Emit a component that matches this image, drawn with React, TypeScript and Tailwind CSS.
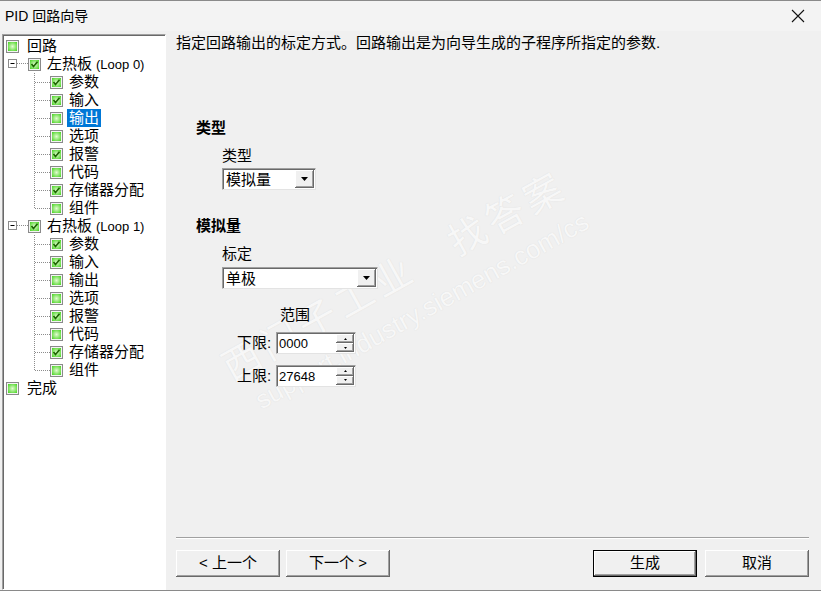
import React from 'react';

type Node = {
  level: 0 | 1 | 2;
  label: string;
  suffix?: string;
  checked: boolean;
  selected?: boolean;
  last?: boolean;
};

const loopChildren = (selectOutput: boolean): Node[] => [
  { level: 2, label: '参数', checked: true },
  { level: 2, label: '输入', checked: true },
  { level: 2, label: '输出', checked: false, selected: selectOutput },
  { level: 2, label: '选项', checked: false },
  { level: 2, label: '报警', checked: true },
  { level: 2, label: '代码', checked: false },
  { level: 2, label: '存储器分配', checked: true },
  { level: 2, label: '组件', checked: false, last: true },
];

const tree: Node[] = [
  { level: 0, label: '回路', checked: false },
  { level: 1, label: '左热板', suffix: '(Loop 0)', checked: true },
  ...loopChildren(true),
  { level: 1, label: '右热板', suffix: '(Loop 1)', checked: true },
  ...loopChildren(false),
  { level: 0, label: '完成', checked: false },
];

// 绿色复选框
function CheckBox({ on }: { on: boolean }) {
  return (
    <svg width="13" height="13" viewBox="0 0 13 13" className="shrink-0">
      <defs>
        <radialGradient id="cbg" cx="50%" cy="50%" r="65%">
          <stop offset="0%" stopColor="#e2fcd0" />
          <stop offset="100%" stopColor="#4fd52a" />
        </radialGradient>
      </defs>
      <rect x="0.5" y="0.5" width="12" height="12" fill="#f4f4f4" stroke="#8a8a8a" />
      <rect x="2" y="2" width="9" height="9" fill="url(#cbg)" />
      {on && <path d="M3.5 6 L5.5 8.5 L9.5 3.8" fill="none" stroke="#1c6500" strokeWidth="1.6" />}
    </svg>
  );
}

function Gutter({ node }: { node: Node }) {
  if (node.level === 0) return <div className="w-[3px] shrink-0" />;
  if (node.level === 1) {
    return (
      <svg width="25" height="18" viewBox="0 0 25 18" className="shrink-0">
        <line x1="14" y1="8.5" x2="25" y2="8.5" stroke="#8c8c8c" strokeDasharray="1 1" />
        <rect x="5.5" y="4.5" width="8" height="8" fill="#fff" stroke="#8c8c8c" />
        <line x1="7.5" y1="8.5" x2="11.5" y2="8.5" stroke="#000" />
      </svg>
    );
  }
  return (
    <svg width="47" height="18" viewBox="0 0 47 18" className="shrink-0">
      <line x1="31.5" y1="0" x2="31.5" y2={node.last ? 9 : 18} stroke="#8c8c8c" strokeDasharray="1 1" />
      <line x1="32" y1="9.5" x2="47" y2="9.5" stroke="#8c8c8c" strokeDasharray="1 1" />
    </svg>
  );
}

function TreeRow({ node }: { node: Node }) {
  return (
    <div className="flex h-[18px] items-center">
      <Gutter node={node} />
      <CheckBox on={node.checked} />
      <span
        className={
          node.selected
            ? 'ml-[4px] bg-[#0078d7] px-[2px] text-white leading-[18px] whitespace-nowrap'
            : node.level === 0
              ? 'ml-[7px] px-[1px] leading-[18px] whitespace-nowrap'
              : 'ml-[5px] px-[1px] leading-[18px] whitespace-nowrap'
        }
      >
        {node.label}
        {node.suffix && <span className="ml-[4px] text-[13px]">{node.suffix}</span>}
      </span>
    </div>
  );
}

function Arrow() {
  return (
    <svg width="7" height="4" viewBox="0 0 7 4">
      <path d="M0 0 H7 L3.5 4 Z" fill="#000" />
    </svg>
  );
}

function Combo({ value, wide }: { value: string; wide?: boolean }) {
  return (
    <div
      className={`flex h-[22px] items-stretch border border-[#a0a0a0] border-b-[#e3e3e3] border-r-[#e3e3e3] bg-white shadow-[inset_1px_1px_0_#696969] ${
        wide ? 'w-[156px]' : 'w-[94px]'
      }`}
    >
      <div className="flex-1 pl-[3px] pt-[1px] leading-[19px]">{value}</div>
      <div className="my-[1px] mr-[1px] flex w-[19px] items-center justify-center bg-[#f0f0f0] shadow-[inset_-1px_-1px_0_#696969,inset_1px_1px_0_#ffffff,inset_-2px_-2px_0_#a0a0a0]">
        <Arrow />
      </div>
    </div>
  );
}

function Spin({ label, value }: { label: string; value: string }) {
  return (
    <div className="flex items-center">
      <span className="w-[39px] whitespace-nowrap">{label}</span>
      <div className="flex h-[22px] w-[80px] items-stretch border border-[#a0a0a0] border-b-[#e3e3e3] border-r-[#e3e3e3] bg-white shadow-[inset_1px_1px_0_#696969]">
        <div className="flex-1 pl-[2px] pt-[2px] font-['Liberation_Sans',sans-serif] text-[13px] leading-[17px]">
          {value}
        </div>
        <div className="my-[1px] mr-[1px] flex w-[18px] flex-col">
          <div className="flex flex-1 items-center justify-center bg-[#f0f0f0] shadow-[inset_-1px_-1px_0_#696969,inset_1px_1px_0_#ffffff,inset_-2px_-2px_0_#a0a0a0]">
            <svg width="3" height="2" viewBox="0 0 3 2">
              <path d="M1.5 0 L3 2 H0 Z" fill="#000" />
            </svg>
          </div>
          <div className="flex flex-1 items-center justify-center bg-[#f0f0f0] shadow-[inset_-1px_-1px_0_#696969,inset_1px_1px_0_#ffffff,inset_-2px_-2px_0_#a0a0a0]">
            <svg width="3" height="2" viewBox="0 0 3 2">
              <path d="M0 0 H3 L1.5 2 Z" fill="#000" />
            </svg>
          </div>
        </div>
      </div>
    </div>
  );
}

function Btn({ children, primary }: { children: React.ReactNode; primary?: boolean }) {
  return (
    <div
      className={`flex h-[27px] w-[104px] items-center justify-center bg-[#f0f0f0] shadow-[inset_-1px_-1px_0_#696969,inset_1px_1px_0_#ffffff,inset_-2px_-2px_0_#a0a0a0] ${
        primary ? 'border border-black' : ''
      }`}
    >
      {children}
    </div>
  );
}

export default function App() {
  return (
    <div className="relative box-border flex h-[591px] w-[821px] flex-col overflow-hidden border-y border-[#8a8a8a] bg-[#f0f0f0] font-['Liberation_Sans','Noto_Sans_CJK_SC',sans-serif] text-[15px] text-black">
      {/* 水印 (在内容下面) */}
      <div className="pointer-events-none absolute left-[395px] top-[276px] z-0 -translate-x-1/2 -translate-y-1/2 -rotate-[29deg] whitespace-nowrap text-[38px] tracking-[5px] text-[#f7f7f7] [text-shadow:0_0_1px_#d8d8d8]">
        西门子工业　找答案
      </div>
      <div className="pointer-events-none absolute left-[422px] top-[310px] z-0 -translate-x-1/2 -translate-y-1/2 -rotate-[29deg] whitespace-nowrap font-['Liberation_Sans',sans-serif] text-[26px] text-[#f7f7f7] [text-shadow:0_0_1px_#d8d8d8]">
        support.industry.siemens.com/cs
      </div>

      {/* 标题栏 */}
      <div className="relative z-10 flex h-[30px] shrink-0 items-center justify-between bg-[#f3f3f3] pl-[5px] pr-[16px]">
        <span className="text-[14px]">PID 回路向导</span>
        <svg width="14" height="14" viewBox="0 0 14 14">
          <path d="M1 1 L13 13 M13 1 L1 13" stroke="#111" strokeWidth="1.1" />
        </svg>
      </div>

      <div className="relative z-10 flex min-h-0 flex-1">
        {/* 左侧树 */}
        <div className="ml-[2px] mt-[3px] w-[164px] shrink-0 border border-[#a0a0a0] border-b-white border-r-white bg-white pt-[2px] shadow-[inset_1px_1px_0_#696969]">
          {tree.map((n, i) => (
            <TreeRow key={i} node={n} />
          ))}
        </div>

        {/* 右侧内容 */}
        <div className="ml-[10px] flex w-[633px] flex-col pt-[3px]">
          <div className="h-[18px] leading-[18px] whitespace-nowrap">
            指定回路输出的标定方式。回路输出是为向导生成的子程序所指定的参数.
          </div>

          <div className="mt-[67px] pl-[20px] font-bold leading-[18px]">类型</div>
          <div className="mt-[10px] pl-[46px] leading-[18px]">类型</div>
          <div className="mt-[3px] pl-[46px]">
            <Combo value="模拟量" />
          </div>

          <div className="mt-[27px] pl-[20px] font-bold leading-[18px]">模拟量</div>
          <div className="mt-[10px] pl-[46px] leading-[18px]">标定</div>
          <div className="mt-[4px] pl-[46px]">
            <Combo value="单极" wide />
          </div>

          <div className="mt-[17px] pl-[104px] leading-[18px]">范围</div>
          <div className="mt-[8px] pl-[61px]">
            <Spin label="下限:" value="0000" />
          </div>
          <div className="mt-[10px] pl-[61px]">
            <Spin label="上限:" value="27648" />
          </div>

          <div className="mt-auto border-t border-[#a0a0a0]">
            <div className="border-t border-white" />
          </div>
          <div className="mb-[13px] mt-[11px] flex justify-between">
            <div className="flex gap-[6px]">
              <Btn>&lt; 上一个</Btn>
              <Btn>下一个 &gt;</Btn>
            </div>
            <div className="flex gap-[8px]">
              <Btn primary>生成</Btn>
              <Btn>取消</Btn>
            </div>
          </div>
        </div>
      </div>
    </div>
  );
}
